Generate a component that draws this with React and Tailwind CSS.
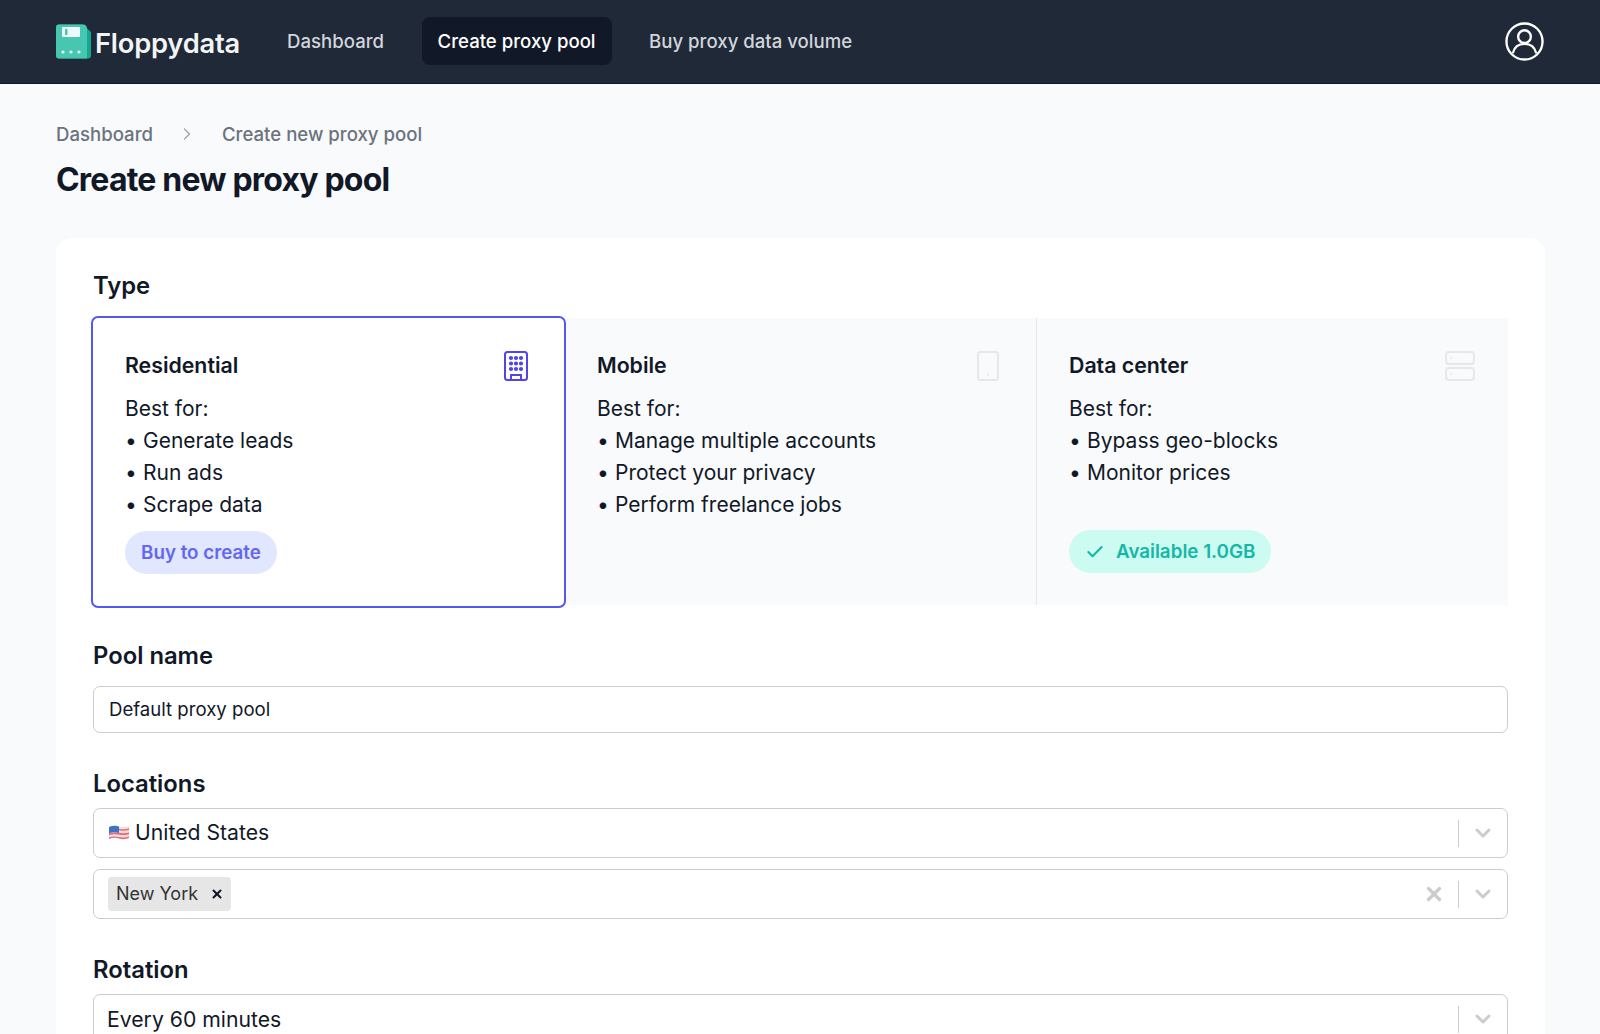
import { Check, ChevronDown, ChevronRight, X } from "lucide-react";

const TYPES = [
  {
    name: "Residential",
    items: ["Generate leads", "Run ads", "Scrape data"],
  },
  {
    name: "Mobile",
    items: ["Manage multiple accounts", "Protect your privacy", "Perform freelance jobs"],
  },
  {
    name: "Data center",
    items: ["Bypass geo-blocks", "Monitor prices"],
  },
];

function Logo() {
  return (
    <svg width="35" height="35" viewBox="0 0 35 35" className="shrink-0">
      <path d="M3 0.500H27L35 8V31.500a3 3 0 0 1-3 3H3a3 3 0 0 1-3-3V3.500a3 3 0 0 1 3-3Z" fill="#14a890" />
      <path d="M3 0.500H27Q31 0.500 31 5V34.500H3a3 3 0 0 1-3-3V3.500a3 3 0 0 1 3-3Z" fill="#47c7b2" />
      <rect x="6" y="3" width="18" height="10" rx="1" fill="#eef9f7" />
      <rect x="9" y="5" width="2.500" height="6" fill="#47c7b2" />
      <circle cx="7" cy="28" r="1.600" fill="#eef9f7" />
      <circle cx="15" cy="28" r="1.600" fill="#eef9f7" />
      <circle cx="23" cy="28" r="1.600" fill="#eef9f7" />
    </svg>
  );
}

function UserIcon() {
  return (
    <svg width="39" height="39" viewBox="0 0 40 40" fill="none" stroke="#fff" strokeWidth="2.400">
      <circle cx="20" cy="20" r="18.500" />
      <circle cx="20" cy="15" r="6.500" />
      <path d="M8 32c1.500-6 6-9.500 12-9.500S30.500 26 32 32" />
    </svg>
  );
}

function BuildingIcon() {
  const dots = [];
  for (let row = 0; row < 3; row++) {
    for (let col = 0; col < 3; col++) {
      dots.push(<circle key={`${row}-${col}`} cx={7 + col * 5} cy={7 + row * 5.500} r="1.100" fill="#4f46e5" />);
    }
  }
  return (
    <svg width="24" height="30" viewBox="0 0 24 30" fill="none" stroke="#4f46e5" strokeWidth="2" className="mt-[2px]">
      <rect x="1" y="1" width="22" height="28" rx="2.500" />
      {dots}
      <path d="M7 29v-5h10v5" />
    </svg>
  );
}

function PhoneIcon() {
  return (
    <svg width="22" height="30" viewBox="0 0 22 30" fill="none" stroke="#e5e7eb" strokeWidth="2" className="mt-[2px]">
      <rect x="1" y="1" width="20" height="28" rx="2.500" />
      <circle cx="11" cy="24" r="0.900" fill="#e5e7eb" stroke="none" />
    </svg>
  );
}

function ServerIcon() {
  return (
    <svg width="30" height="30" viewBox="0 0 30 30" fill="none" stroke="#e5e7eb" strokeWidth="2" className="mt-[2px]">
      <rect x="1" y="1" width="28" height="12" rx="3" />
      <rect x="1" y="17" width="28" height="12" rx="3" />
      <circle cx="6" cy="7" r="0.900" fill="#e5e7eb" stroke="none" />
      <circle cx="6" cy="23" r="0.900" fill="#e5e7eb" stroke="none" />
    </svg>
  );
}

function Flag() {
  return (
    <svg width="20" height="15" viewBox="0 0 20 15" className="ml-px shrink-0">
      <path d="M0 2Q5 0 10 1.500T20 1V13Q15 15 10 13.500T0 14Z" fill="#f7dcdc" />
      <path d="M0 4Q5 2.500 10 3.800T20 3.300V5Q15 6.500 10 5.300T0 6ZM0 8.300Q5 6.800 10 7.800T20 7.500V9.200Q15 10.700 10 9.700T0 10.200ZM0 12.200Q5 11 10 12T20 11.500V13Q15 15 10 13.500T0 14Z" fill="#e2707a" />
      <path d="M0 2Q5 0 10 1.500V8Q5 6.500 0 8.300Z" fill="#3f73c4" />
    </svg>
  );
}

function TypeCard({ type, index }) {
  const selected = index === 0;
  return (
    <div
      className={
        selected
          ? "relative w-[475px] h-[292px] rounded-[7px] border-2 border-[#5558ef] bg-white pl-[32px] pr-[36px] pt-[31px]"
          : index === 1
            ? "relative w-[471px] h-[287px] my-[2px] border-r border-[#e5e7eb] bg-[#f9fafb] pl-[31px] pr-[37px] pt-[31px]"
            : "relative flex-1 h-[287px] my-[2px] bg-[#f9fafb] pl-[32px] pr-[33px] pt-[31px]"
      }
    >
      <div className="flex items-start justify-between">
        <h3 className="text-[21.3px] leading-[32px] font-semibold text-[#111827]">{type.name}</h3>
        {index === 0 && <BuildingIcon />}
        {index === 1 && <PhoneIcon />}
        {index === 2 && <ServerIcon />}
      </div>
      <div className="mt-[12px] text-[21px] leading-[32px] text-[#111827]">
        <p>Best for:</p>
        <ul>
          {type.items.map((item) => (
            <li key={item} className="flex">
              <span className="w-[18px] shrink-0">•</span>
              {item}
            </li>
          ))}
        </ul>
      </div>
      {index === 0 && (
        <div className="absolute left-[32px] top-[213px] flex h-[43px] items-center rounded-full bg-[#e0e7ff] px-[16px] pt-px text-[18.8px] font-semibold text-[#6366f1]">
          Buy to create
        </div>
      )}
      {index === 2 && (
        <div className="absolute left-[32px] top-[212px] flex h-[43px] items-center gap-[11px] rounded-full bg-[#ccfbf1] px-[16px] pt-px text-[18.8px] font-semibold text-[#14b8a6]">
          <Check size={20} strokeWidth={2.500} />
          Available 1.0GB
        </div>
      )}
    </div>
  );
}

function SelectField({ children, clearable, className }) {
  return (
    <div className={`flex h-[50px] items-center rounded-[7px] border border-[#cccccc] bg-white pl-[14px] ${className || ""}`}>
      <div className="flex flex-1 items-center gap-[6px]">{children}</div>
      {clearable && <X size={22} strokeWidth={3.500} className="mr-[13px] text-[#cccccc]" />}
      <div className="h-[27px] w-px bg-[#cccccc]" />
      <ChevronDown size={24} strokeWidth={3} className="mx-[12px] text-[#cccccc]" />
    </div>
  );
}

export default function App() {
  return (
    <div className="h-[1034px] overflow-hidden bg-[#f9fafb] font-['Inter',sans-serif] text-[#111827]">
      <header className="flex h-[84px] items-center border-b border-[#111827] bg-[#1f2937] pl-[56px] pr-[56px]">
        <div className="flex items-center gap-[4px]">
          <Logo />
          <span className="mt-[6px] text-[27.300px] font-semibold tracking-[-0.2px] text-[#f3f4f6]">Floppydata</span>
        </div>
        <nav className="ml-[31px] flex items-center gap-[21.500px] text-[18.600px] font-medium">
          <a className="px-[16px] py-[12px] text-[#d1d5db]">Dashboard</a>
          <a className="flex h-[48px] items-center rounded-lg bg-[#111827] px-[16px] text-white">Create proxy pool</a>
          <a className="px-[16px] py-[12px] text-[#d1d5db]">Buy proxy data volume</a>
        </nav>
        <div className="ml-auto">
          <UserIcon />
        </div>
      </header>

      <main className="pl-[56px] pr-[55px] pt-[36px]">
        <div className="flex items-center text-[18.600px] font-medium leading-[28px] text-[#6b7280]">
          <span>Dashboard</span>
          <ChevronRight size={20} className="mx-[24.500px] text-[#9ca3af]" strokeWidth={1.500} />
          <span>Create new proxy pool</span>
        </div>
        <h1 className="mt-[12px] text-[32px] font-bold leading-[40px] tracking-[-0.8px] text-[#111827]">Create new proxy pool</h1>

        <section className="mt-[38px] rounded-2xl bg-white px-[37px] pt-[30px] pb-[40px]">
          <h2 className="text-[23.800px] font-semibold leading-[36px] text-[#111827]">Type</h2>
          <div className="mt-[12px] -ml-[2px] flex">
            {TYPES.map((type, i) => (
              <TypeCard key={type.name} type={type} index={i} />
            ))}
          </div>

          <h2 className="mt-[30px] text-[23.800px] font-semibold leading-[36px]">Pool name</h2>
          <div className="mt-[12px] flex h-[47px] items-center rounded-[7px] border border-[#cccccc] px-[15px] text-[18.600px]">
            Default proxy pool
          </div>

          <h2 className="mt-[33px] text-[23.800px] font-semibold leading-[36px]">Locations</h2>
          <SelectField className="mt-[6px]">
            <Flag />
            <span className="text-[21.200px]">United States</span>
          </SelectField>
          <SelectField clearable className="mt-[11px]">
            <div className="flex h-[34px] items-center rounded-sm bg-[#e6e6e6] pb-[2px] pl-[8px] pr-[7px] text-[18px] text-[#333333]">
              New York
              <X size={14} strokeWidth={3.500} className="ml-[12px] mt-[2px] text-[#111827]" />
            </div>
          </SelectField>

          <h2 className="mt-[33px] text-[23.800px] font-semibold leading-[36px]">Rotation</h2>
          <SelectField className="mt-[6px]">
            <span className="-ml-px mt-[2px] text-[21.200px]">Every 60 minutes</span>
          </SelectField>
        </section>
      </main>
    </div>
  );
}
